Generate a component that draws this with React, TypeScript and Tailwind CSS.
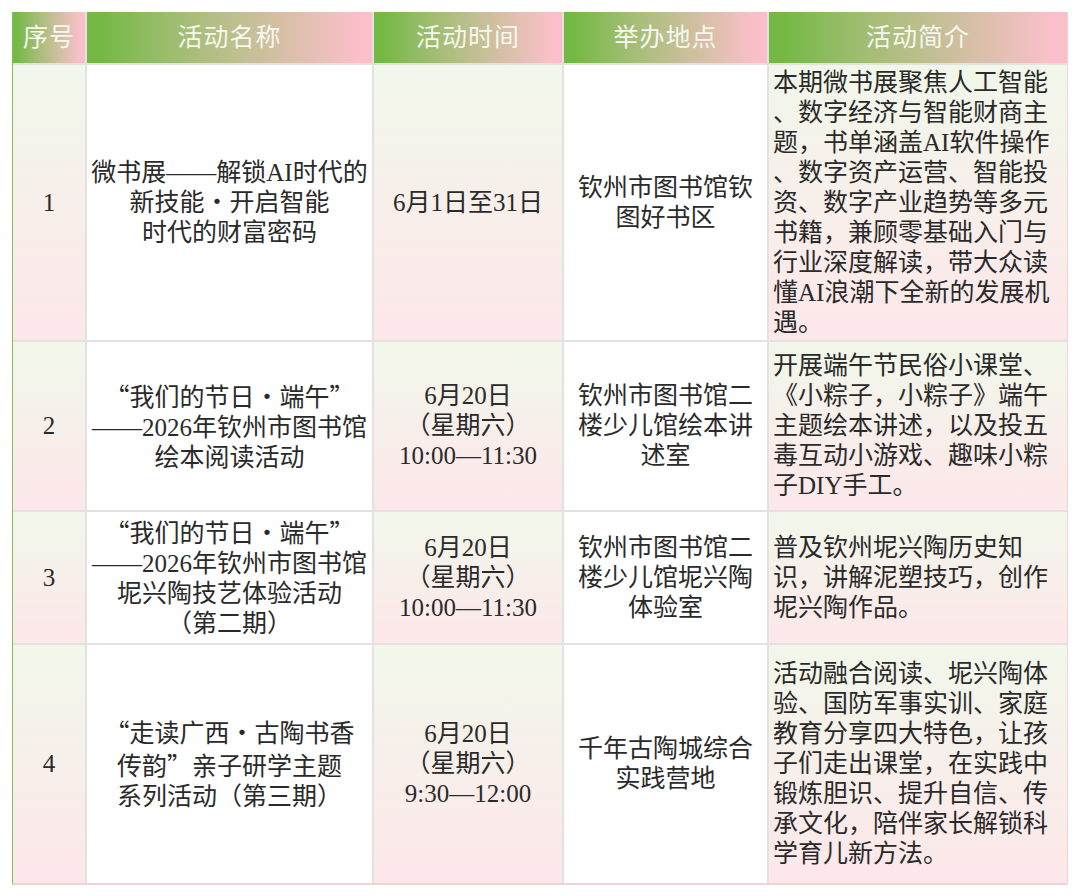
const headers = ["序号", "活动名称", "活动时间", "举办地点", "活动简介"];

type Row = {
  no: string;
  name: string[];
  time: string[];
  place: string[];
  desc: string[];
  h: string;
};

const rows: Row[] = [
  {
    no: "1",
    name: ["微书展——解锁AI时代的", "新技能・开启智能", "时代的财富密码"],
    time: ["6月1日至31日"],
    place: ["钦州市图书馆钦", "图好书区"],
    desc: [
      "本期微书展聚焦人工智能",
      "、数字经济与智能财商主",
      "题，书单涵盖AI软件操作",
      "、数字资产运营、智能投",
      "资、数字产业趋势等多元",
      "书籍，兼顾零基础入门与",
      "行业深度解读，带大众读",
      "懂AI浪潮下全新的发展机",
      "遇。",
    ],
    h: "h-[275px]",
  },
  {
    no: "2",
    name: ["“我们的节日・端午”", "——2026年钦州市图书馆", "绘本阅读活动"],
    time: ["6月20日", "（星期六）", "10:00—11:30"],
    place: ["钦州市图书馆二", "楼少儿馆绘本讲", "述室"],
    desc: [
      "开展端午节民俗小课堂、",
      "《小粽子，小粽子》端午",
      "主题绘本讲述，以及投五",
      "毒互动小游戏、趣味小粽",
      "子DIY手工。",
    ],
    h: "h-[168px]",
  },
  {
    no: "3",
    name: ["“我们的节日・端午”", "——2026年钦州市图书馆", "坭兴陶技艺体验活动", "（第二期）"],
    time: ["6月20日", "（星期六）", "10:00—11:30"],
    place: ["钦州市图书馆二", "楼少儿馆坭兴陶", "体验室"],
    desc: ["普及钦州坭兴陶历史知", "识，讲解泥塑技巧，创作", "坭兴陶作品。"],
    h: "h-[131px]",
  },
  {
    no: "4",
    name: ["“走读广西・古陶书香", "传韵”亲子研学主题", "系列活动（第三期）"],
    time: ["6月20日", "（星期六）", "9:30—12:00"],
    place: ["千年古陶城综合", "实践营地"],
    desc: [
      "活动融合阅读、坭兴陶体",
      "验、国防军事实训、家庭",
      "教育分享四大特色，让孩",
      "子们走出课堂，在实践中",
      "锻炼胆识、提升自信、传",
      "承文化，陪伴家长解锁科",
      "学育儿新方法。",
    ],
    h: "h-[238px]",
  },
];

const tint = "bg-linear-to-b from-[#f1f7ea] to-[#fde7ea]";

// curly quotes in the source are full width, split them out so they can use the CJK face
function Text({ s }: { s: string }) {
  const parts = s.split(/([“”])/);
  return (
    <>
      {parts.map((p, i) =>
        p === "“" || p === "”" ? (
          <span
            key={i}
            className="inline-block w-[25px] text-center [font-family:'Noto_Sans_CJK_SC',sans-serif]"
          >
            {p}
          </span>
        ) : (
          <span key={i}>{p}</span>
        )
      )}
    </>
  );
}

function Lines({ lines }: { lines: string[] }) {
  return (
    <>
      {lines.map((l, i) => (
        <div key={i} className="whitespace-nowrap">
          <Text s={l} />
        </div>
      ))}
    </>
  );
}

export default function App() {
  return (
    <div
      className="w-[1080px] h-[896px] bg-white pt-[12px] pl-[12px] text-[#2a2a2a] text-[25px] leading-[30px]"
      style={{ fontFamily: '"Liberation Serif", "Noto Sans CJK SC", serif' }}
    >
      <div className="w-[1056px] flex flex-col gap-[2px] bg-[#e2e2e2] border-l border-l-[#86be5c] border-r border-r-[#f2d4d8] border-b-2 border-b-[#efd3d7]">
        {/* header */}
        <div className="flex gap-[2px] h-[51px]">
          {headers.map((h, i) => (
            <div
              key={h}
              className={
                "flex items-center justify-center text-[#f4f8ee] tracking-[1px] bg-linear-to-r from-[#74b944] from-5% to-[#fbbfca] to-95% " +
                ["w-[72px]", "w-[285px]", "w-[188px]", "w-[203px]", "w-[298px]"][i]
              }
            >
              {h}
            </div>
          ))}
        </div>

        {rows.map((r) => (
          <div key={r.no} className={"flex gap-[2px] " + r.h}>
            <div className={"w-[72px] flex items-center justify-center " + tint}>{r.no}</div>
            <div className="w-[285px] bg-white flex flex-col items-center justify-center text-center">
              <Lines lines={r.name} />
            </div>
            <div className={"w-[188px] flex flex-col items-center justify-center text-center " + tint}>
              <Lines lines={r.time} />
            </div>
            <div className="w-[203px] bg-white flex flex-col items-center justify-center text-center">
              <Lines lines={r.place} />
            </div>
            <div className={"w-[298px] flex flex-col justify-center pl-[4px] " + tint}>
              <Lines lines={r.desc} />
            </div>
          </div>
        ))}
      </div>
    </div>
  );
}
